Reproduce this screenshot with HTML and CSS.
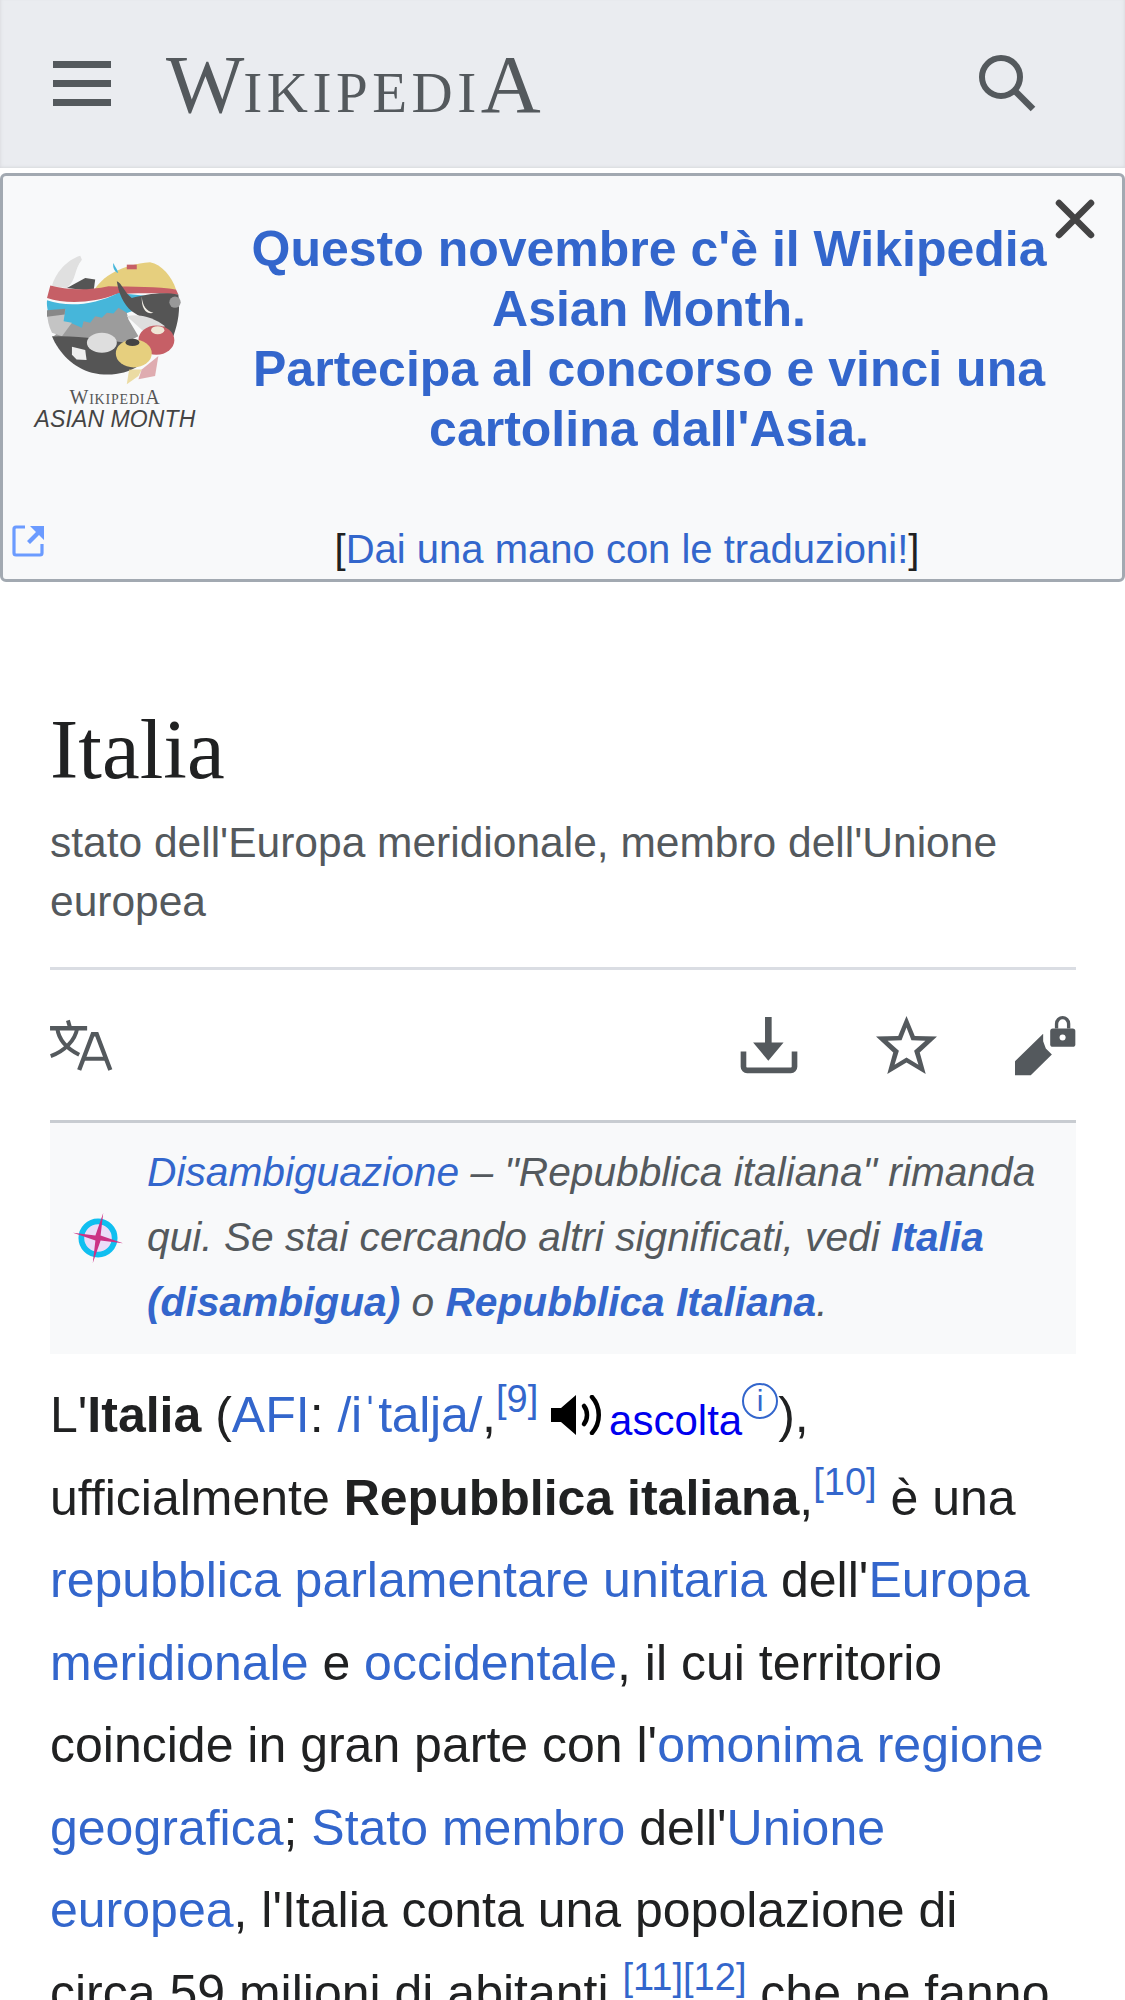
FILE: index.html
```html
<!DOCTYPE html>
<html lang="it">
<head>
<meta charset="utf-8">
<title>Italia - Wikipedia</title>
<link rel="stylesheet" href="styles.css">
</head>
<body>
<header class="topbar">
  <svg class="ico-menu" viewBox="0 0 58 46" width="58" height="46"><path d="M0 0h58v7H0zM0 19h58v7H0zM0 38h58v7H0z" fill="#54595d"/></svg>
  <div class="wordmark"><span class="wm-w">W</span><span class="wm-small">ikipedi</span><span class="wm-big">A</span></div>
  <svg class="ico-search" viewBox="0 0 58 58" width="58" height="58"><circle cx="22" cy="22" r="19" fill="none" stroke="#54595d" stroke-width="6"/><path d="M35.500 35.500L54 54" fill="none" stroke="#54595d" stroke-width="6.500"/></svg>
</header>
<section class="banner">
  <svg class="ico-close" viewBox="0 0 40 40" width="40" height="40"><path d="M4 4l32 32M36 4L4 36" stroke="#444" stroke-width="6.500" stroke-linecap="round"/></svg>
  <svg class="ico-ext" viewBox="0 0 32 32" width="32" height="32"><path d="M13 2H4a2 2 0 0 0-2 2v24a2 2 0 0 0 2 2h24a2 2 0 0 0 2-2v-9" fill="none" stroke="#6b9bff" stroke-width="3.200"/><path d="M18 1h14v14l-5-5-9 9-3-3 9-9z" fill="#6b9bff"/></svg>
  <div class="banner-main">
    <div class="wam-logo">
      <svg class="wam-globe" viewBox="92 220 500 400" width="167" height="133">
        <path d="M160 320C170 280 205 240 245 228L250 240C225 270 235 300 205 325Z" fill="#e0e0e0"/>
        <path d="M205 325L260 295L290 300L285 335Z" fill="#555"/>
        <path d="M285 335C310 290 370 255 455 248C490 255 520 290 533 330L400 335Z" fill="#e6cf7e"/>
        <path d="M345 250c4 12 12 18 14 30-10-2-18-18-14-30z" fill="#46b6da"/>
        <path d="M385 255h30v14h-30z" fill="#c65f66"/>
        <path d="M155 318C200 330 260 335 330 320C400 322 480 320 533 330L540 345C470 340 410 340 350 345C290 370 200 375 145 355Z" fill="#c65f66"/>
        <path d="M145 362C210 385 290 375 360 340L455 350L400 395L250 450L165 430C150 410 143 385 145 362Z" fill="#46b6da"/>
        <path d="M355 305C370 310 378 340 400 355C440 345 490 335 540 345C546 390 540 430 525 470L470 440L400 395C375 375 360 340 355 305Z" fill="#555"/>
        <path d="M430 350C432 380 445 395 465 400C445 405 428 390 430 350Z" fill="#f4f0e8"/>
        <circle cx="530" cy="368" r="17" fill="#999"/>
        <path d="M215 430L250 445L255 425L275 430L290 410L310 415L325 400L345 402L360 385L385 400L390 420L420 470L360 500L165 470Z" fill="#9c9c9c"/>
        <path d="M385 410C420 400 470 415 500 440L440 460Z" fill="#dedede"/>
        <path d="M145 395L200 390L195 425L220 430L190 470L160 460C150 440 146 420 145 395Z" fill="#c4c4c4"/>
        <path d="M145 392L200 388L198 405L145 412Z" fill="#888"/>
        <path d="M160 470C230 470 300 475 380 490L420 560C380 585 330 592 280 580C225 565 180 520 160 470Z" fill="#555"/>
        <ellipse cx="310" cy="490" rx="45" ry="30" fill="#dedede"/>
        <path d="M220 502l40 10 4 30-30-2-14-14z" fill="#eee"/>
        <path d="M392 570L385 615 420 590 430 570z" fill="#e6cf7e" opacity=".7"/>
        <path d="M430 570L420 600 470 590 480 530z" fill="#c65f66" opacity=".5"/>
        <ellipse cx="474" cy="482" rx="54" ry="44" fill="#c65f66"/>
        <ellipse cx="478" cy="452" rx="20" ry="12" fill="#efe6d6"/>
        <ellipse cx="406" cy="522" rx="54" ry="42" fill="#e6cf7e"/>
        <ellipse cx="402" cy="489" rx="21" ry="11" fill="#444"/>
      </svg>
      <div class="wam-name"><span class="wam-b">W</span>ikipedi<span class="wam-b">A</span></div>
      <div class="wam-tag">ASIAN MONTH</div>
    </div>
    <h2 class="banner-head">
      <a href="#">Questo novembre c'è il Wikipedia Asian Month.</a><br>
      <a href="#">Partecipa al concorso e vinci una cartolina dall'Asia.</a>
    </h2>
  </div>
  <p class="banner-foot">[<a href="#">Dai una mano con le traduzioni!</a>]</p>
</section>
<main class="content">
  <h1 class="page-title">Italia</h1>
  <p class="tagline">stato dell'Europa meridionale, membro dell'Unione europea</p>
  <nav class="actions">
    <svg viewBox="30 40 190 160" width="63" height="53" fill="none" stroke="#54595d"><path d="M30 68h112" stroke-width="13"/><path d="M84 44l7 24" stroke-width="12"/><path d="M52 68c4 34 30 62 66 80" stroke-width="12"/><path d="M112 68c-6 38-40 70-80 84" stroke-width="12"/><path d="M118 194L159 86h12l41 108" stroke-width="13"/><path d="M135 160h62" stroke-width="12"/></svg>
    <div class="actions-right">
      <svg viewBox="30 30 180 175" width="60" height="58"><path d="M108 33h20v77h36l-46 55-46-55h36z" fill="#54595d"/><path d="M43 137v46a11 11 0 0 0 11 11h132a11 11 0 0 0 11-11v-46" fill="none" stroke="#54595d" stroke-width="17"/></svg>
      <svg viewBox="435 27 190 181" width="63" height="60"><path fill-rule="evenodd" d="M530 30L555 90L622 92L570 140L588 205L530 170L472 205L490 140L438 92L505 90ZM530 65L515 103L473 105L507 135L494 177L530 155L566 177L553 135L587 105L545 103Z" fill="#54595d"/></svg>
      <svg viewBox="855 22 185 182" width="62" height="61"><path d="M858 160L942 78V100L950 122L968 140L905 202H858Z" fill="#54595d"/><rect x="963" y="62" width="75" height="55" rx="8" fill="#54595d"/><path d="M982 62V48a18 18 0 0 1 36 0v14" fill="none" stroke="#54595d" stroke-width="10"/><circle cx="1000" cy="89" r="9" fill="#fff"/></svg>
    </div>
  </nav>
  <div class="hatnote">
    <svg class="ico-compass" viewBox="0 0 48 48" width="50" height="50"><circle cx="24" cy="24" r="14" fill="#eadcf8"/><circle cx="24" cy="24" r="16" fill="none" stroke="#10bff0" stroke-width="5.500"/><path d="M29 0L26.500 21.500 48 29 26.500 26.500 19 48 21.500 26.500 0 19 21.500 21.500z" fill="#cb3285"/></svg>
    <p class="hatnote-text"><a href="#">Disambiguazione</a> – "Repubblica italiana" rimanda qui. Se stai cercando altri significati, vedi <a href="#"><b>Italia (disambigua)</b></a> o <a href="#"><b>Repubblica Italiana</b></a>.</p>
  </div>
  <p class="lead">L'<b>Italia</b> (<a href="#">AFI</a>: <a class="ipa" href="#">/iˈtalja/</a>,<sup class="ref"><a href="#">[9]</a></sup> <svg class="ico-speaker" viewBox="0 0 52 40" width="52" height="40"><path d="M0 13h10L25 0v40L10 27H0z" fill="#000"/><path d="M33 11c4 5 4 13 0 18" fill="none" stroke="#000" stroke-width="4.500" stroke-linecap="round"/><path d="M41 2c9 10 9 26 0 36" fill="none" stroke="#000" stroke-width="4.500" stroke-linecap="round"/></svg><a class="audio" href="#">ascolta</a><sup class="info"><a href="#">i</a></sup>), ufficialmente <b>Repubblica italiana</b>,<sup class="ref"><a href="#">[10]</a></sup> è una <a href="#">repubblica parlamentare unitaria</a> dell'<a href="#">Europa meridionale</a> e <a href="#">occidentale</a>, il cui territorio coincide in gran parte con l'<a href="#">omonima regione geografica</a>; <a href="#">Stato membro</a> dell'<a href="#">Unione europea</a>, l'Italia conta una popolazione di circa 59 milioni di abitanti,<sup class="ref"><a href="#">[11]</a><a href="#">[12]</a></sup> che ne fanno</p>
</main>
</body>
</html>
```

FILE: styles.css
```css
html, body { margin: 0; padding: 0; background: #fff; }
body { height: 2000px; overflow: hidden; font-family: "Liberation Sans", Arial, sans-serif; color: #202122; }
a { color: #36c; text-decoration: none; }

.topbar { display: flex; align-items: center; height: 168px; box-sizing: border-box; padding: 0 52px 0 53px; background: #eaecf0; box-shadow: inset 0 -3px 3px -2px #d8dade, inset 3px 0 3px -2px #dcdee2, inset -3px 0 3px -2px #dcdee2; }
.ico-menu { flex: none; }
.wordmark { flex: 1; margin-left: 55px; font-family: "Liberation Serif", serif; color: #54595d; text-transform: uppercase; line-height: 1; white-space: nowrap; }
.wm-w { font-size: 83px; letter-spacing: 2px; margin-right: -3px; }
.wm-big { font-size: 83px; }
.wm-small { font-size: 57px; letter-spacing: 4.500px; }
.ico-search { flex: none; margin-right: 36px; }

.banner { position: relative; margin-top: 5px; height: 409px; box-sizing: border-box; border: 3px solid #a2a9b1; border-radius: 6px; background: #f8f9fa; }
.ico-close { position: absolute; top: 23px; right: 27px; filter: blur(.7px); }
.ico-ext { position: absolute; left: 9px; bottom: 22px; }
.banner-main { display: flex; }
.wam-logo { flex: none; width: 172px; padding: 77px 0 0 2px; text-align: center; display: flex; flex-direction: column; align-items: center; margin-left: 24px; }
.wam-globe { margin-left: -5px; }
.wam-name { margin-top: 3px; font-family: "Liberation Serif", serif; font-size: 14px; line-height: 16px; color: #555; text-transform: uppercase; letter-spacing: .8px; }
.wam-b { font-size: 20px; }
.wam-tag { font-family: "Liberation Sans", sans-serif; font-style: italic; font-size: 23px; line-height: 22px; letter-spacing: .1px; color: #444; white-space: nowrap; }
.banner-head { flex: 1; margin: 43px 55px 0 30px; font-size: 50px; line-height: 60px; font-weight: 700; text-align: center; }
.banner-foot { margin: 0; position: absolute; left: 129px; right: 0; bottom: 5px; text-align: center; font-size: 40px; line-height: 50px; }

.content { padding: 0 49px 0 50px; }
.page-title { margin: 115px 0 0; font-family: "Liberation Serif", serif; font-weight: 400; font-size: 85px; line-height: 104px; color: #202122; }
.tagline { margin: 13px 0 0; font-size: 42.500px; line-height: 58.500px; color: #54595d; }
.actions { display: flex; justify-content: space-between; align-items: center; margin-top: 36px; height: 156px; box-sizing: border-box; border-top: 3px solid #dadde3; border-bottom: 3px solid #c8ccd1; }
.actions-right { display: flex; align-items: center; gap: 76px; }
.hatnote { display: flex; align-items: center; background: #f8f9fa; padding: 0 30px 2px 23px; height: 231px; box-sizing: border-box; }
.ico-compass { flex: none; margin-right: 24px; }
.hatnote-text { margin: 0; font-size: 40.700px; line-height: 65px; font-style: italic; color: #54595d; }

.lead { margin: 20px 0 0; font-size: 50px; line-height: 82.500px; color: #202122; }
sup { line-height: 0; }
.ipa { letter-spacing: -.3px; }
.ref { font-size: 38px; vertical-align: 20px; }
.ico-speaker { vertical-align: -3px; margin: 0 6px 0 -1px; }
.audio { color: #00e; font-size: 42px; line-height: 0; vertical-align: -3px; }
.info { display: inline-block; vertical-align: 21px; }
.info a { display: inline-block; box-sizing: border-box; width: 36px; height: 36px; border: 2px solid #36c; border-radius: 50%; font-size: 30px; line-height: 32px; text-align: center; }
```
